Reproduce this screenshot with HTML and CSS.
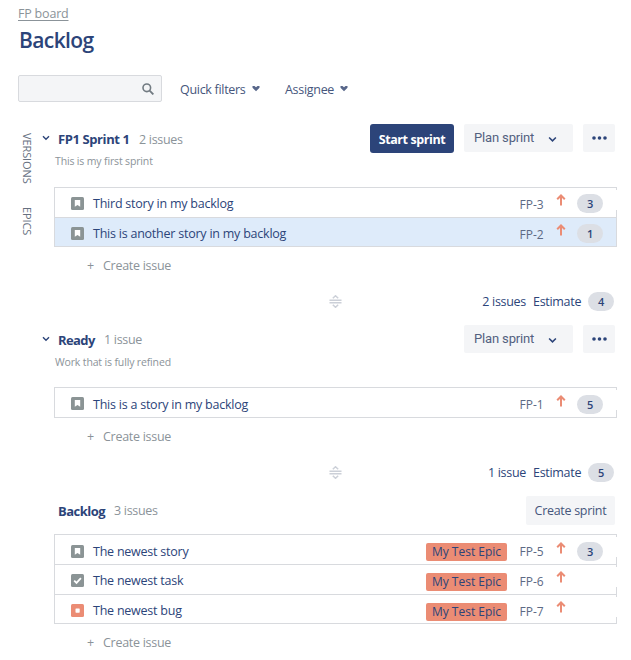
FILE: index.html
```html
<!DOCTYPE html>
<html lang="en">
<head>
<meta charset="utf-8">
<title>Backlog</title>
<link rel="stylesheet" href="styles.css">
</head>
<body>
<svg class="defs" width="0" height="0" aria-hidden="true">
  <symbol id="story" viewBox="0 0 13 13"><rect width="13" height="13" rx="1.5" fill="#8b9495"/><path d="M3.8 3h5.4v6.8L6.5 7.9 3.8 9.8z" fill="#fff"/></symbol>
  <symbol id="task" viewBox="0 0 13 13"><rect width="13" height="13" rx="1.5" fill="#8b9495"/><path d="M3.2 6.6l2.3 2.3 4.4-4.8" fill="none" stroke="#fff" stroke-width="1.8"/></symbol>
  <symbol id="bug" viewBox="0 0 13 13"><rect width="13" height="13" rx="1.5" fill="#eb8c74"/><rect x="4.5" y="4.5" width="4.2" height="4.2" rx=".6" fill="#fff"/></symbol>
  <symbol id="up" viewBox="0 0 10 12"><path d="M5 11.5V1.5M1.2 5.3L5 1.5l3.8 3.8" fill="none" stroke="#eb8c74" stroke-width="2"/></symbol>
  <symbol id="chev" viewBox="0 0 8 6"><path d="M1 1.2l3 3 3-3" fill="none" stroke="currentColor" stroke-width="1.4"/></symbol>
  <symbol id="dots" viewBox="0 0 15 4"><circle cx="2" cy="2" r="1.8"/><circle cx="7.5" cy="2" r="1.8"/><circle cx="13" cy="2" r="1.8"/></symbol>
  <symbol id="handle" viewBox="0 0 13 13"><path d="M.5 5.3h12M.5 7.8h12M3.8 3.3L6.5.8l2.7 2.5M3.8 9.8l2.7 2.5 2.7-2.5" fill="none" stroke="#ccd0d8" stroke-width="1.5"/></symbol>
</svg>
<header>
  <a class="crumb">FP board</a>
  <h1>Backlog</h1>
  <div class="filters">
    <div class="search"><svg width="12" height="12" viewBox="0 0 12 12"><circle cx="4.8" cy="4.8" r="3.8" fill="none" stroke="#727b82" stroke-width="1.6"/><path d="M7.6 7.6l3.8 3.8" stroke="#727b82" stroke-width="1.9"/></svg></div>
    <span class="filter quick">Quick filters</span><svg class="caret" width="8" height="6"><path d="M.5 0h2L4 1.2 5.5 0h2v1.8L4 5.2.5 1.8z"/></svg>
    <span class="filter assignee">Assignee</span><svg class="caret" width="8" height="6"><path d="M.5 0h2L4 1.2 5.5 0h2v1.8L4 5.2.5 1.8z"/></svg>
  </div>
</header>
<div class="board">
  <nav><span class="versions">VERSIONS</span><span class="epics">EPICS</span></nav>
  <main>
    <section>
      <div class="head">
        <svg class="toggle" width="8" height="6"><use href="#chev"/></svg>
        <h2 class="w-sprint">FP1 Sprint 1</h2><span class="count">2 issues</span>
        <div class="actions"><button class="primary">Start sprint</button><button class="plan"><span>Plan sprint</span><svg width="9" height="7"><use href="#chev"/></svg></button><button class="more"><svg width="15" height="4"><use href="#dots"/></svg></button></div>
      </div>
      <p class="goal goal-one">This is my first sprint</p>
      <ul>
        <li><svg class="type"><use href="#story"/></svg><span class="name">Third story in my backlog</span><span class="key">FP-3</span><svg class="up"><use href="#up"/></svg><b class="pill">3</b></li>
        <li class="selected"><svg class="type"><use href="#story"/></svg><span class="name">This is another story in my backlog</span><span class="key">FP-2</span><svg class="up"><use href="#up"/></svg><b class="pill">1</b></li>
      </ul>
      <div class="create"><i>+</i><span>Create issue</span></div>
      <div class="total"><svg class="handle"><use href="#handle"/></svg><span class="sum">2 issues</span><span class="est">Estimate</span><b class="pill">4</b></div>
    </section>
    <section class="ready">
      <div class="head">
        <svg class="toggle" width="8" height="6"><use href="#chev"/></svg>
        <h2 class="w-ready">Ready</h2><span class="count">1 issue</span>
        <div class="actions"><button class="plan"><span>Plan sprint</span><svg width="9" height="7"><use href="#chev"/></svg></button><button class="more"><svg width="15" height="4"><use href="#dots"/></svg></button></div>
      </div>
      <p class="goal goal-two">Work that is fully refined</p>
      <ul>
        <li><svg class="type"><use href="#story"/></svg><span class="name">This is a story in my backlog</span><span class="key">FP-1</span><svg class="up"><use href="#up"/></svg><b class="pill">5</b></li>
      </ul>
      <div class="create"><i>+</i><span>Create issue</span></div>
      <div class="total"><svg class="handle"><use href="#handle"/></svg><span class="sum">1 issue</span><span class="est">Estimate</span><b class="pill">5</b></div>
    </section>
    <section class="backlog">
      <div class="head">
        <h2 class="w-backlog">Backlog</h2><span class="count">3 issues</span>
        <div class="actions"><button class="new">Create sprint</button></div>
      </div>
      <ul>
        <li><svg class="type"><use href="#story"/></svg><span class="name">The newest story</span><span class="epic">My Test Epic</span><span class="key">FP-5</span><svg class="up"><use href="#up"/></svg><b class="pill">3</b></li>
        <li class="tall"><svg class="type"><use href="#task"/></svg><span class="name">The newest task</span><span class="epic">My Test Epic</span><span class="key">FP-6</span><svg class="up"><use href="#up"/></svg></li>
        <li><svg class="type"><use href="#bug"/></svg><span class="name">The newest bug</span><span class="epic">My Test Epic</span><span class="key">FP-7</span><svg class="up"><use href="#up"/></svg></li>
      </ul>
      <div class="create"><i>+</i><span>Create issue</span></div>
    </section>
  </main>
</div>
</body>
</html>
```
FILE: styles.css
```css
* { box-sizing: border-box; }
body { margin: 0; width: 631px; height: 660px; background: #fff; color: #2c4479; font: 12.5px/18px "Open Sans", "Noto Sans", sans-serif; letter-spacing: -0.3px; white-space: nowrap; }
svg { display: block; flex: none; }
.defs { display: none; }
h1, h2, p, ul { margin: 0; padding: 0; }
header { height: 123px; padding: 5px 18px 0; }
.crumb { display: block; width: max-content; height: 18px; color: #8b9399; text-decoration: underline; text-underline-offset: 2px; letter-spacing: -0.2px; }
h1 { height: 34px; padding-left: 1px; font-size: 21px; line-height: 34px; font-weight: 600; letter-spacing: -0.6px; }
.filters { display: flex; align-items: center; height: 27px; margin-top: 18px; }
.search { display: flex; align-items: center; justify-content: flex-end; width: 144px; height: 27px; padding-right: 7px; background: #f4f5f7; border: 1px solid #d8dade; border-radius: 2px; }
.filter { margin-left: 18px; padding-top: 3px; color: #46567c; }
.quick { width: 72px; }
.assignee { width: 55px; margin-left: 25px; }
.caret { fill: #58678a; }
.board { display: flex; }
nav { width: 54px; padding: 10px 0 0 18px; color: #66707f; font-size: 11px; letter-spacing: -0.1px; }
nav span { display: block; width: 18px; writing-mode: vertical-rl; }
.versions { height: 74px; }
main { width: 563px; }
section { height: 201px; }
.ready { height: 171px; }
.head { display: flex; align-items: flex-start; height: 31px; margin-left: -12px; }
.toggle { margin: 12px 8px 0 0; }
h2 { margin-top: 7px; font-size: 13px; line-height: 18px; font-weight: 700; letter-spacing: -0.4px; }
.w-sprint { width: 81px; }
.w-ready { width: 46px; letter-spacing: -0.6px; }
.w-backlog { width: 56px; margin-left: 16px; letter-spacing: -0.5px; }
.count { margin-top: 8px; color: #8b9399; }
.ready .count, .backlog .count { margin-top: 7px; }
.actions { display: flex; gap: 10px; margin: 1px 2px 0 auto; }
button { display: flex; align-items: center; justify-content: center; height: 29px; padding: 0; border: 0; border-radius: 2px; background: #f4f5f7; color: #2c4479; font: inherit; letter-spacing: inherit; }
.primary { width: 84px; padding-top: 2px; border-radius: 3px; background: #2c4479; color: #fff; font-weight: 700; letter-spacing: -0.4px; }
.plan { width: 109px; height: 28px; justify-content: flex-start; padding-left: 10px; color: #53617f; font-family: Roboto, sans-serif; font-size: 13px; letter-spacing: -0.15px; }
.plan span { width: 74px; padding-bottom: 1px; text-align: left; }
.plan svg { margin-top: 3px; color: #2c4479; }
.more { width: 32px; height: 28px; fill: #2c4479; }
.new { width: 89px; color: #46567c; }
.goal { height: 33px; padding-left: 1px; font-size: 10.5px; line-height: 15px; letter-spacing: -0.15px; color: #8b9399; }
.goal-two { height: 32px; }
ul { list-style: none; border: 1px solid #d8dade; }
li { position: relative; display: flex; align-items: flex-start; height: 29px; padding-left: 16px; }
li:not(.selected)::after { content: ""; position: absolute; right: -1px; top: 2px; width: 1px; height: 20px; background: #fff; }
li + li { border-top: 1px solid #d8dade; }
li.tall { height: 30px; }
.type { width: 13px; height: 13px; margin: 9px 9px 0 0; }
.backlog .type { margin-top: 10px; }
.backlog li + li .type { margin-top: 9px; }
.name { flex: 1; margin-top: 7px; letter-spacing: -0.23px; }
.ready .name, .backlog li:first-child .name { margin-top: 8px; }
.key { width: 37px; margin-top: 8px; font-size: 12px; color: #5c6984; letter-spacing: 0; text-indent: 0.5px; }
.up { width: 10px; height: 12px; margin: 6px 50px 0 0; }
.ready .up, .backlog li:first-child .up { margin-top: 7px; }
.pill { width: 26px; height: 19px; border-radius: 10px; background: #dcdfe5; font-size: 11px; line-height: 19px; text-align: center; font-weight: 600; }
li .pill { margin: 6px 13px 0 -39px; }
.ready li .pill, .backlog li .pill { margin-top: 7px; }
.selected { background: #deebfa; }
.epic { width: 81px; height: 18px; margin: 8px 12px 0 0; border-radius: 2px; background: #eb8c74; text-align: center; font-size: 12px; letter-spacing: 0; }
.create { display: flex; align-items: center; height: 36px; padding: 2px 0 0 33px; color: #8b9399; }
.create i { width: 16px; font-style: normal; }
.create span { letter-spacing: -0.28px; }
.total { display: flex; align-items: center; height: 36px; padding-top: 1px; }
.handle { width: 13px; height: 13px; margin: 0 0 0 275px; }
.sum { margin-left: auto; padding-top: 1px; }
.est { width: 47px; margin: 0 8px 0 7px; padding-top: 1px; }
.total .pill { margin: 0 3px 0 0; }
.backlog { height: 165px; }
.backlog .head { height: 39px; }
```
